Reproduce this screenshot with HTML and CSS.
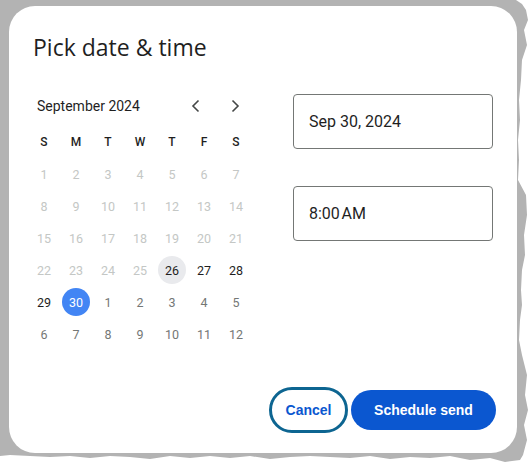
FILE: index.html
```html
<!DOCTYPE html>
<html lang="en">
<head>
<meta charset="utf-8">
<title>Pick date &amp; time</title>
<link rel="stylesheet" href="styles.css">
</head>
<body>
<div class="frame">
  <div class="dialog">
    <h1 class="title">Pick date &amp; time</h1>
    <div class="body">
      <div class="calendar">
        <div class="month-row">
          <span class="month">September 2024</span>
          <div class="nav">
            <button class="nav-btn" aria-label="Previous month"><svg width="12" height="14" viewBox="0 0 12 14"><path d="M8.5 1.5 L3 7 L8.5 12.5" fill="none" stroke="#444746" stroke-width="1.6"/></svg></button>
            <button class="nav-btn" aria-label="Next month"><svg width="12" height="14" viewBox="0 0 12 14"><path d="M3.5 1.5 L9 7 L3.5 12.5" fill="none" stroke="#444746" stroke-width="1.6"/></svg></button>
          </div>
        </div>
        <div class="grid">
          <span class="dow">S</span><span class="dow">M</span><span class="dow">T</span><span class="dow">W</span><span class="dow">T</span><span class="dow">F</span><span class="dow">S</span>
          <span class="day off"><i>1</i></span><span class="day off"><i>2</i></span><span class="day off"><i>3</i></span><span class="day off"><i>4</i></span><span class="day off"><i>5</i></span><span class="day off"><i>6</i></span><span class="day off"><i>7</i></span>
          <span class="day off"><i>8</i></span><span class="day off"><i>9</i></span><span class="day off"><i>10</i></span><span class="day off"><i>11</i></span><span class="day off"><i>12</i></span><span class="day off"><i>13</i></span><span class="day off"><i>14</i></span>
          <span class="day off"><i>15</i></span><span class="day off"><i>16</i></span><span class="day off"><i>17</i></span><span class="day off"><i>18</i></span><span class="day off"><i>19</i></span><span class="day off"><i>20</i></span><span class="day off"><i>21</i></span>
          <span class="day off"><i>22</i></span><span class="day off"><i>23</i></span><span class="day off"><i>24</i></span><span class="day off"><i>25</i></span><span class="day today"><i>26</i></span><span class="day"><i>27</i></span><span class="day"><i>28</i></span>
          <span class="day"><i>29</i></span><span class="day selected"><i>30</i></span><span class="day next"><i>1</i></span><span class="day next"><i>2</i></span><span class="day next"><i>3</i></span><span class="day next"><i>4</i></span><span class="day next"><i>5</i></span>
          <span class="day next"><i>6</i></span><span class="day next"><i>7</i></span><span class="day next"><i>8</i></span><span class="day next"><i>9</i></span><span class="day next"><i>10</i></span><span class="day next"><i>11</i></span><span class="day next"><i>12</i></span>
        </div>
      </div>
      <div class="fields">
        <div class="field">Sep 30, 2024</div>
        <div class="field">8:00&#8202;AM</div>
      </div>
    </div>
    <div class="footer">
      <button class="btn cancel">Cancel</button>
      <button class="btn primary">Schedule send</button>
    </div>
  </div>
</div>
</body>
</html>
```

FILE: styles.css
```css
html, body {
  margin: 0;
  padding: 0;
  background: #ffffff;
}

.frame {
  width: 531px;
  height: 465px;
  box-sizing: border-box;
  padding: 6px 0 0 9px;
  background: #b3b3b3;
  clip-path: polygon(0 0, 516px 0, 522px 4px, 526px 10px, 528px 20px, 524px 30px, 527px 45px, 522px 60px, 521px 80px, 519px 100px, 520px 120px, 518px 140px, 519px 160px, 518px 180px, 526px 195px, 527px 215px, 524px 235px, 525px 255px, 522px 270px, 521px 290px, 522px 305px, 520px 320px, 519px 340px, 522px 355px, 527px 375px, 525px 395px, 528px 410px, 524px 425px, 527px 440px, 523px 455px, 520px 460px, 505px 462px, 490px 458px, 470px 460px, 450px 456px, 430px 458px, 410px 457px, 390px 459px, 370px 456px, 350px 458px, 330px 457px, 310px 456px, 290px 457px, 270px 459px, 250px 456px, 230px 458px, 210px 456px, 190px 458px, 170px 456px, 150px 459px, 130px 457px, 110px 456px, 90px 458px, 70px 456px, 50px 457px, 30px 456px, 10px 455px, 0 456px);
}

.dialog {
  width: 508px;
  height: 447px;
  box-sizing: border-box;
  background: #ffffff;
  border-radius: 26px;
  display: flex;
  flex-direction: column;
  font-family: Roboto, "Liberation Sans", Arial, sans-serif;
  color: #1f1f1f;
}

.title {
  margin: 27px 0 0 24px;
  font-family: "Open Sans", Roboto, sans-serif;
  font-size: 23px;
  line-height: 28px;
  font-weight: 400;
  color: #1f1f1f;
}

.body {
  display: flex;
  margin-top: 29px;
  padding-left: 19px;
}

.calendar {
  width: 224px;
}

.month-row {
  display: flex;
  align-items: center;
  height: 32px;
}

.month {
  padding-left: 9px;
  font-size: 14px;
  color: #1f1f1f;
  flex: 1;
}

.nav {
  display: flex;
  gap: 15px;
  margin-right: 5px;
}

.nav-btn {
  width: 24px;
  height: 24px;
  padding: 0;
  border: 0;
  background: none;
  display: flex;
  align-items: center;
  justify-content: center;
}

.grid {
  display: grid;
  grid-template-columns: repeat(7, 32px);
  grid-auto-rows: 32px;
  margin-top: 4px;
}

.dow {
  display: flex;
  align-items: center;
  justify-content: center;
  font-size: 12px;
  font-weight: 500;
  color: #1f1f1f;
}

.day {
  display: flex;
  align-items: center;
  justify-content: center;
  font-size: 12.5px;
  color: #1f1f1f;
}

.day i {
  font-style: normal;
  width: 28px;
  height: 28px;
  border-radius: 50%;
  display: flex;
  align-items: center;
  justify-content: center;
}

.day.off { color: #c4c7c5; }
.day.next { color: #747775; }
.day.today i { background: #e9eaed; }
.day.selected i { background: #4285f4; color: #ffffff; }

.fields {
  display: flex;
  flex-direction: column;
  gap: 37px;
  margin-left: 41px;
  margin-top: 4px;
}

.field {
  width: 200px;
  height: 55px;
  box-sizing: border-box;
  border: 1px solid #747775;
  border-radius: 4px;
  padding-left: 15px;
  display: flex;
  align-items: center;
  font-size: 16px;
  color: #1f1f1f;
}

.footer {
  margin-top: auto;
  display: flex;
  justify-content: flex-end;
  align-items: center;
  gap: 3px;
  padding: 0 21px 20px 0;
}

.btn {
  font-family: "Liberation Sans", Arial, sans-serif;
  font-size: 14px;
  font-weight: 700;
  border-radius: 23px;
  cursor: pointer;
}

.cancel {
  width: 79px;
  height: 46px;
  border: 3px solid #0d6591;
  background: #ffffff;
  color: #0b57d0;
}

.primary {
  width: 145px;
  height: 40px;
  border: 0;
  border-radius: 20px;
  background: #0b57d0;
  color: #ffffff;
}
```
